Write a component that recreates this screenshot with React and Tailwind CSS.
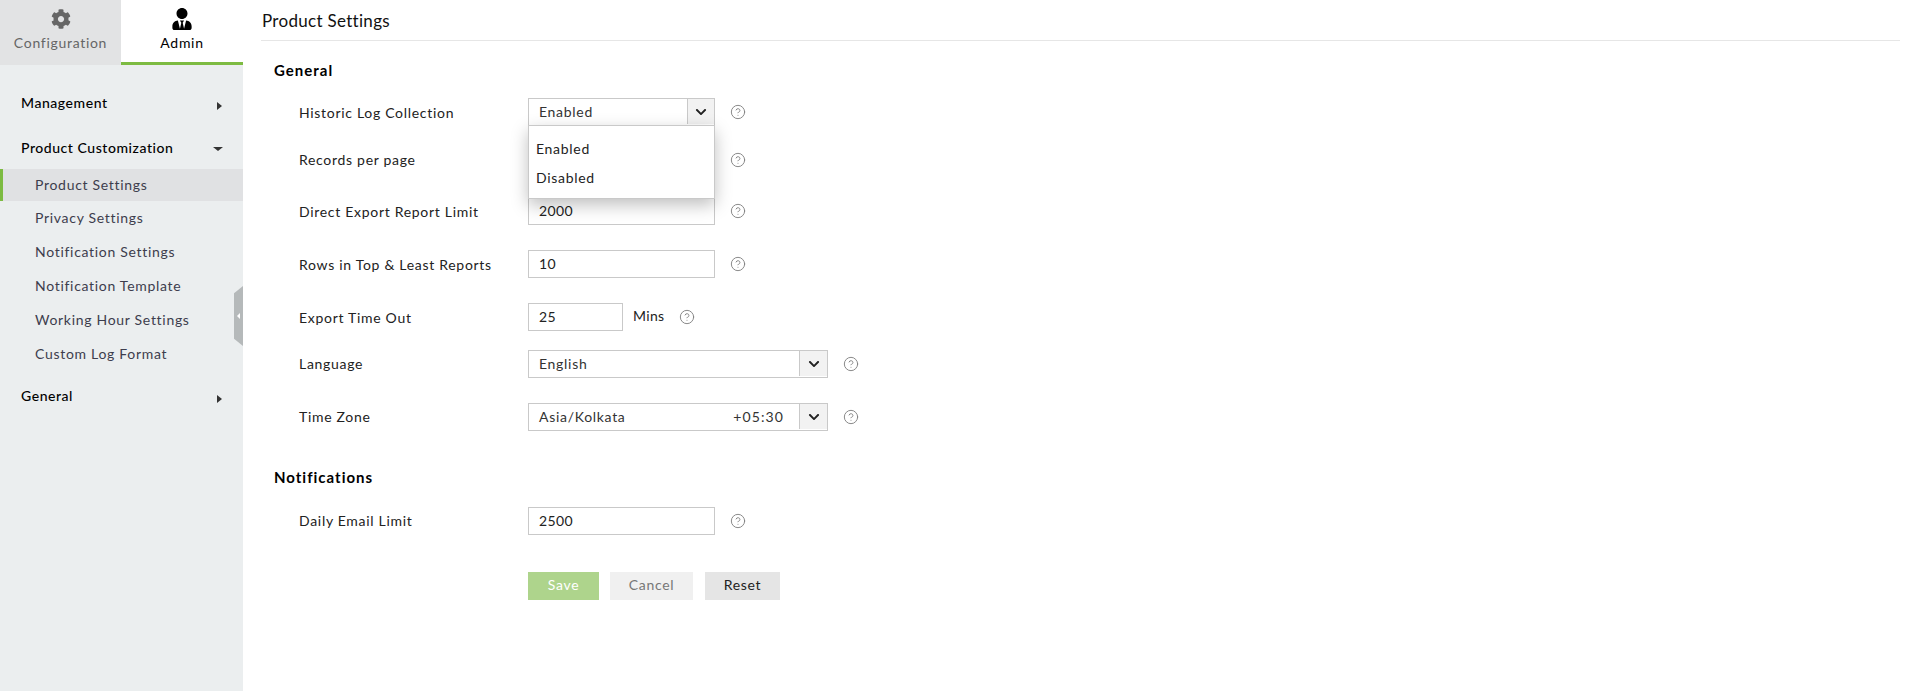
import { CircleHelp } from "lucide-react";
import { FaChevronDown, FaCog, FaUserTie } from "react-icons/fa";

const subItems = [
    { label: "Product Settings", active: true, h: "h-[32px]" },
    { label: "Privacy Settings", h: "h-[34px]" },
    { label: "Notification Settings", h: "h-[34px]" },
    { label: "Notification Template", h: "h-[34px]" },
    { label: "Working Hour Settings", h: "h-[34px]" },
    { label: "Custom Log Format", h: "h-[33px]" },
];

const Help = () => <CircleHelp size={16} strokeWidth={1.4} className="text-[#808080] shrink-0" />;

const Caret = ({ down }) =>
    down ? (
        <span className="mt-[2px] w-0 h-0 border-x-[5px] border-x-transparent border-t-[4px] border-t-[#333]" />
    ) : (
        <span className="mt-[5px] mr-[1px] w-0 h-0 border-y-[4px] border-y-transparent border-l-[5px] border-l-[#333]" />
    );

const MenuHead = ({ label, down, className }) => (
    <div className={`flex items-center justify-between pl-[21px] pr-[20px] text-[14px] tracking-[0.55px] font-medium text-black ${className}`}>
        <span className="-mt-[2px]">{label}</span>
        <Caret down={down} />
    </div>
);

const Input = ({ value, className = "w-[187px]" }) => (
    <div className={`h-[28px] border border-[#c9c9c9] bg-white pl-[10px] pb-[2px] flex items-center tracking-[0.35px] text-[#222] ${className}`}>
        {value}
    </div>
);

const Select = ({ value, right, chevron = "w-[27px]", className }) => (
    <div className={`h-[28px] border border-[#c9c9c9] bg-white flex ${className}`}>
        <div className="flex-1 flex items-center justify-between pl-[10px] pr-[15px] pb-[2px] text-[#333]">
            <span>{value}</span>
            {right && <span className="tracking-[1.1px]">{right}</span>}
        </div>
        <div className={`${chevron} mb-[1px] bg-[#f2f2f2] border-l border-[#c9c9c9] flex items-center justify-center text-[#222]`}>
            <FaChevronDown size={12} />
        </div>
    </div>
);

const Row = ({ label, className, labelClass = "", children, help = true }) => (
    <div className={`flex items-center pl-[38px] ${className}`}>
        <div className={`w-[229px] text-[#222] ${labelClass}`}>{label}</div>
        {children}
        {help && (
            <span className="ml-[15px]">
                <Help />
            </span>
        )}
    </div>
);

const App = () => {
    return (
        <div className="flex h-[691px] w-full bg-white font-['Lato',sans-serif] text-[14px] tracking-[0.7px] overflow-hidden">
            <aside className="relative w-[243px] shrink-0 bg-[#ebeeef]">
                <div className="flex h-[65px]">
                    <div className="w-[121px] bg-[#e2e3e4] flex flex-col items-center pt-[9px] text-[#666]">
                        <FaCog size={20} className="text-[#666]" />
                        <span className="mt-[3px]">Configuration</span>
                    </div>
                    <div className="flex-1 bg-white border-b-[3px] border-[#7dbb42] flex flex-col items-center pt-[8px] text-black">
                        <FaUserTie size={22} />
                        <span className="mt-[2px]">Admin</span>
                    </div>
                </div>

                <MenuHead label="Management" className="mt-[27px] h-[22px]" />
                <MenuHead label="Product Customization" down className="mt-[23px] h-[22px] mb-[10px]" />

                {subItems.map((item) => (
                    <div
                        key={item.label}
                        className={`flex items-center pb-[1px] text-[#3d3d4d] ${item.h} ${
                            item.active ? "bg-[#e0e1e3] border-l-[3px] border-[#7dbb42] pl-[32px]" : "pl-[35px]"
                        }`}
                    >
                        {item.label}
                    </div>
                ))}

                <MenuHead label="General" className="mt-[15px] h-[22px]" />

                {/* collapse handle */}
                <div className="absolute right-0 top-[286px] w-[9px] h-[60px] bg-[#b5b9ba] [clip-path:polygon(100%_0,100%_100%,0_88%,0_12%)] flex items-center justify-center">
                    <span className="w-0 h-0 border-y-[3px] border-y-transparent border-r-[3px] border-r-white" />
                </div>
            </aside>

            <main className="flex-1 pl-[18px] pr-[19px]">
                <div className="h-[41px] border-b border-[#e6e6e6] pt-[8px] text-[17px] tracking-[0.3px] text-[#111] pl-[1px]">
                    Product Settings
                </div>

                <div className="relative pt-[20px]">
                    <h2 className="pl-[13px] font-bold text-[15px] tracking-[1px] text-black h-[18px] leading-[18px]">General</h2>

                    <Row label="Historic Log Collection" className="mt-[19px]">
                        <Select value="Enabled" className="w-[187px]" />
                    </Row>
                    {/* value of this field sits behind the open dropdown */}
                    <Row label="Records per page" labelClass="pb-[2px]" className="mt-[20px]">
                        <Input value="" />
                    </Row>
                    <Row label="Direct Export Report Limit" className="mt-[23px]">
                        <Input value="2000" />
                    </Row>
                    <Row label="Rows in Top & Least Reports" className="mt-[25px]">
                        <Input value="10" />
                    </Row>
                    <Row label="Export Time Out" className="mt-[25px]" help={false}>
                        <Input value="25" className="w-[95px]" />
                        <span className="ml-[10px] pb-[3px] text-[#222] tracking-[0.35px]">Mins</span>
                        <span className="ml-[14px]">
                            <Help />
                        </span>
                    </Row>
                    <Row label="Language" labelClass="pb-[2px]" className="mt-[19px]">
                        <Select value="English" chevron="w-[28px]" className="w-[300px]" />
                    </Row>
                    <Row label="Time Zone" labelClass="pb-[2px]" className="mt-[25px]">
                        <Select value="Asia/Kolkata" right="+05:30" chevron="w-[28px]" className="w-[300px]" />
                    </Row>

                    <h2 className="pl-[13px] mt-[37px] font-bold text-[15px] tracking-[1px] text-black h-[18px] leading-[18px]">Notifications</h2>

                    <Row label="Daily Email Limit" labelClass="pb-[2px]" className="mt-[21px]">
                        <Input value="2500" />
                    </Row>

                    <div className="flex mt-[37px] pl-[267px]">
                        <button className="w-[71px] h-[28px] pb-[3px] bg-[#aed48c] text-white">Save</button>
                        <button className="w-[83px] h-[28px] pb-[3px] ml-[11px] bg-[#f0f0f0] text-[#777]">Cancel</button>
                        <button className="w-[75px] h-[28px] pb-[3px] ml-[12px] bg-[#e5e5e5] text-[#222]">Reset</button>
                    </div>

                    {/* open dropdown of the first select */}
                    <div className="absolute left-[267px] top-[84px] w-[187px] h-[74px] bg-white border border-[#c9c9c9] shadow-[0_6px_16px_rgba(0,0,0,0.25)] pt-[8px] pl-[7px] text-[#222]">
                        <div className="h-[29px] flex items-center">Enabled</div>
                        <div className="h-[29px] flex items-center">Disabled</div>
                    </div>
                </div>
            </main>
        </div>
    );
};

export default App;
